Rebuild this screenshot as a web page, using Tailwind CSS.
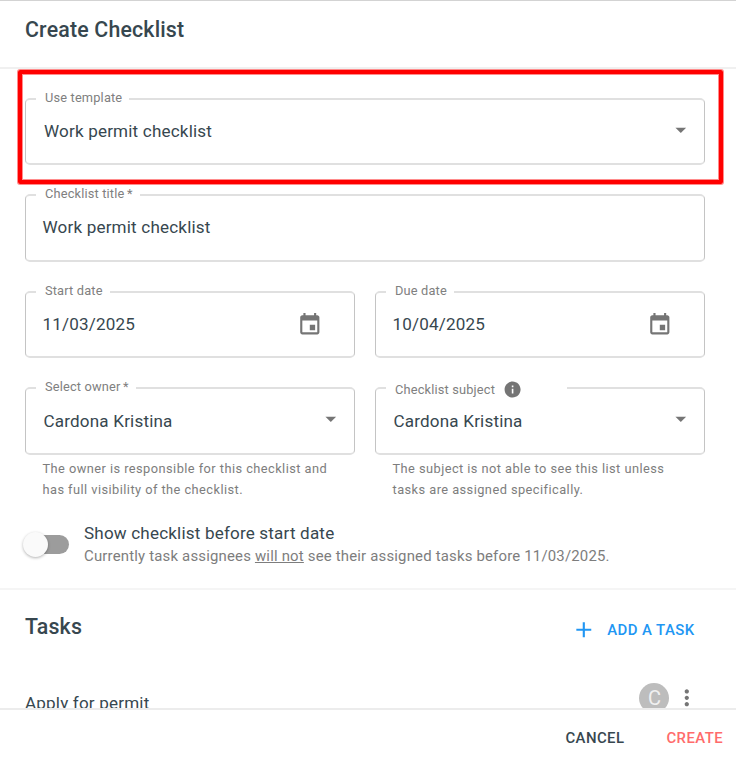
<!DOCTYPE html>
<html lang="en">
<head>
  <meta charset="UTF-8">
  <meta name="viewport" content="width=device-width, initial-scale=1.0">
  <title>Create Checklist</title>
  <script src="https://cdn.jsdelivr.net/npm/@tailwindcss/browser@4"></script>
</head>
<body class="bg-white text-[#37474f] font-['Roboto',sans-serif] h-[761px] overflow-hidden flex flex-col relative">

  <!-- Header -->
  <header class="h-[69px] shrink-0 border-t border-t-[#d3d3d3] border-b-2 border-b-[#f0f0f0] px-[25px] pt-[15px]">
    <h1 class="text-[21.33px] leading-7 tracking-[0.18px] font-medium">Create Checklist</h1>
  </header>

  <main class="flex-1 min-h-0 overflow-hidden">
    <form class="pl-[25px] pr-[31px] pt-[21px] flex flex-col gap-[21px]">

      <!-- Template -->
      <fieldset class="h-[75px] border-x border-y-2 border-x-[#c4c4c4] border-y-[#e0e0e0] rounded-[5px] pl-[10px]">
        <legend class="pl-[9px] pr-[7px] pb-[3px] text-[12.8px] leading-[15px] tracking-[0.17px] text-[#808080]">Use template</legend>
        <div class="h-[48px] flex items-center justify-between pl-[8px] pr-[10px] text-[17.07px] tracking-[0.18px]">
          <span>Work permit checklist</span>
          <svg class="w-[25.6px] h-[25.6px] mb-[5px] fill-[#757575]" viewBox="0 0 24 24"><path d="M7 10l5 5 5-5z"/></svg>
        </div>
      </fieldset>

      <!-- Title -->
      <fieldset class="h-[76px] border-x border-y-2 border-x-[#c4c4c4] border-y-[#e0e0e0] rounded-[5px] pl-[10px]">
        <legend class="pl-[9px] pr-[7px] pb-[3px] text-[12.8px] leading-[15px] tracking-[0.17px] text-[#808080]">Checklist title<span class="ml-[2.5px]">*</span></legend>
        <div class="h-[48px] flex items-center pl-[6.5px] text-[17.07px] tracking-[0.18px]">Work permit checklist</div>
      </fieldset>

      <!-- Dates -->
      <div class="grid grid-cols-2 gap-5">
        <fieldset class="h-[75px] border-x border-y-2 border-x-[#c4c4c4] border-y-[#e0e0e0] rounded-[5px] pl-[10px]">
          <legend class="pl-[9px] pr-[7px] pb-[3px] text-[12.8px] leading-[15px] tracking-[0.17px] text-[#808080]">Start date</legend>
          <div class="h-[48px] flex items-center justify-between pl-[6.5px] pr-[31px] text-[17.07px] tracking-[0.18px]">
            <span>11/03/2025</span>
            <svg class="w-[25.6px] h-[25.6px] mb-px fill-[#757575]" viewBox="0 0 24 24"><path d="M17 12h-5v5h5v-5zM16 1v2H8V1H6v2H5c-1.11 0-1.99.9-1.99 2L3 19c0 1.1.89 2 2 2h14c1.1 0 2-.9 2-2V5c0-1.1-.9-2-2-2h-1V1h-2zm3 18H5V8h14v11z"/></svg>
          </div>
        </fieldset>
        <fieldset class="h-[75px] border-x border-y-2 border-x-[#c4c4c4] border-y-[#e0e0e0] rounded-[5px] pl-[10px]">
          <legend class="pl-[9px] pr-[7px] pb-[3px] text-[12.8px] leading-[15px] tracking-[0.17px] text-[#808080]">Due date</legend>
          <div class="h-[48px] flex items-center justify-between pl-[6.5px] pr-[31px] text-[17.07px] tracking-[0.18px]">
            <span>10/04/2025</span>
            <svg class="w-[25.6px] h-[25.6px] mb-px fill-[#757575]" viewBox="0 0 24 24"><path d="M17 12h-5v5h5v-5zM16 1v2H8V1H6v2H5c-1.11 0-1.99.9-1.99 2L3 19c0 1.1.89 2 2 2h14c1.1 0 2-.9 2-2V5c0-1.1-.9-2-2-2h-1V1h-2zm3 18H5V8h14v11z"/></svg>
          </div>
        </fieldset>
      </div>

      <!-- Owner and subject -->
      <div class="grid grid-cols-2 gap-5">
        <div>
          <fieldset class="h-[76px] border-x border-y-2 border-x-[#c4c4c4] border-y-[#e0e0e0] rounded-[5px] pl-[10px]">
            <legend class="pl-[9px] pr-[7px] pb-[3px] text-[12.8px] leading-[15px] tracking-[0.17px] text-[#808080]">Select owner<span class="ml-[2.5px]">*</span></legend>
            <div class="h-[49px] flex items-center justify-between pl-[7.5px] pr-[10px] text-[17.07px] tracking-[0.18px]">
              <span>Cardona Kristina</span>
              <svg class="w-[25.6px] h-[25.6px] mb-[5px] fill-[#757575]" viewBox="0 0 24 24"><path d="M7 10l5 5 5-5z"/></svg>
            </div>
          </fieldset>
          <p class="mt-[3px] pl-[17.5px] text-[12.8px] leading-[21.3px] tracking-[0.45px] text-[#7d7d7d]">The owner is responsible for this checklist and<br>has full visibility of the checklist.</p>
        </div>
        <div>
          <fieldset class="h-[76px] border-x border-y-2 border-x-[#c4c4c4] border-y-[#e0e0e0] rounded-[5px] pl-[10px]">
            <legend class="w-[181px] h-[18px] pl-[9px] flex items-center text-[12.8px] tracking-[0.17px] text-[#808080]">
              <span class="mt-[3px]">Checklist subject</span>
              <svg class="w-[19.2px] h-[19.2px] ml-[7.5px] mt-[3px] fill-[#757575]" viewBox="0 0 24 24"><path d="M12 2C6.48 2 2 6.48 2 12s4.48 10 10 10 10-4.48 10-10S17.52 2 12 2zm1 15h-2v-6h2v6zm0-8h-2V7h2v2z"/></svg>
            </legend>
            <div class="h-[49px] flex items-center justify-between pl-[7.5px] pr-[10px] text-[17.07px] tracking-[0.18px]">
              <span>Cardona Kristina</span>
              <svg class="w-[25.6px] h-[25.6px] mb-[5px] fill-[#757575]" viewBox="0 0 24 24"><path d="M7 10l5 5 5-5z"/></svg>
            </div>
          </fieldset>
          <p class="mt-[3px] pl-[17.5px] text-[12.8px] leading-[21.3px] tracking-[0.45px] text-[#7d7d7d]">The subject is not able to see this list unless<br>tasks are assigned specifically.</p>
        </div>
      </div>

      <!-- Visibility switch -->
      <div class="flex h-[45px] items-start">
        <div class="w-[37px] h-[19px] ml-[7px] mt-[13.5px] rounded-full bg-[#9c9c9c] flex items-center">
          <span class="w-[25px] h-[25px] -ml-[9px] shrink-0 rounded-full bg-[#fafafa] shadow-[0_1px_3px_rgba(0,0,0,0.3)]"></span>
        </div>
        <div class="ml-[15px]">
          <p class="text-[17.07px] leading-[23px] tracking-[0.18px]">Show checklist before start date</p>
          <p class="text-[14.93px] leading-[22px] tracking-[0.185px] text-[#7d7d7d]">Currently task assignees <u>will not</u> see their assigned tasks before 11/03/2025.</p>
        </div>
      </div>
    </form>

    <!-- Tasks -->
    <section class="mt-[21px] border-t-2 border-[#f5f5f5] pl-[25px] pr-[41px]">
      <div class="h-[78px] flex items-center justify-between">
        <h2 class="pb-[4px] text-[21.33px] tracking-[0.18px] font-medium">Tasks</h2>
        <button class="mr-[0.5px] pt-[3px] flex items-center gap-[10.5px] text-[14.93px] tracking-[0.42px] font-medium text-[#2196f3]">
          <svg class="w-[25.6px] h-[25.6px] -mt-px fill-[#2196f3]" viewBox="0 0 24 24"><path d="M19 13h-6v6h-2v-6H5v-2h6V5h2v6h6v2z"/></svg>
          ADD A TASK
        </button>
      </div>
      <div class="h-[60px] flex items-center">
        <span class="flex-1 pt-[12px] text-[17.07px] tracking-[0.18px]">Apply for permit</span>
        <span class="w-[30px] h-[30px] rounded-full bg-[#bdbdbd] text-[#f0f0f0] text-[20px] flex items-center justify-center">C</span>
        <svg class="w-[25.6px] h-[25.6px] ml-[5px] -mr-[5px] mt-px fill-[#757575]" viewBox="0 0 24 24"><path d="M12 8c1.1 0 2-.9 2-2s-.9-2-2-2-2 .9-2 2 .9 2 2 2zm0 2c-1.1 0-2 .9-2 2s.9 2 2 2 2-.9 2-2-.9-2-2-2zm0 6c-1.1 0-2 .9-2 2s.9 2 2 2 2-.9 2-2-.9-2-2-2z"/></svg>
      </div>
    </section>
  </main>

  <!-- Actions -->
  <footer class="h-[53px] shrink-0 border-t-2 border-[#ececec] pr-[13px] flex items-center justify-end gap-[42px] text-[14.93px] tracking-[0.42px] font-medium">
    <button class="pt-[5px]">CANCEL</button>
    <button class="pt-[5px] text-[#ff6b6b]">CREATE</button>
  </footer>

  <!-- Highlight around the template field -->
  <div class="absolute left-[18px] top-[70px] w-[705px] h-[114px] border-4 border-[#ff0000] rounded-[2px] shadow-[0_0_0_1px_rgba(255,0,0,0.45),inset_0_0_0_1px_rgba(255,0,0,0.45)] pointer-events-none"></div>
</body>
</html>
